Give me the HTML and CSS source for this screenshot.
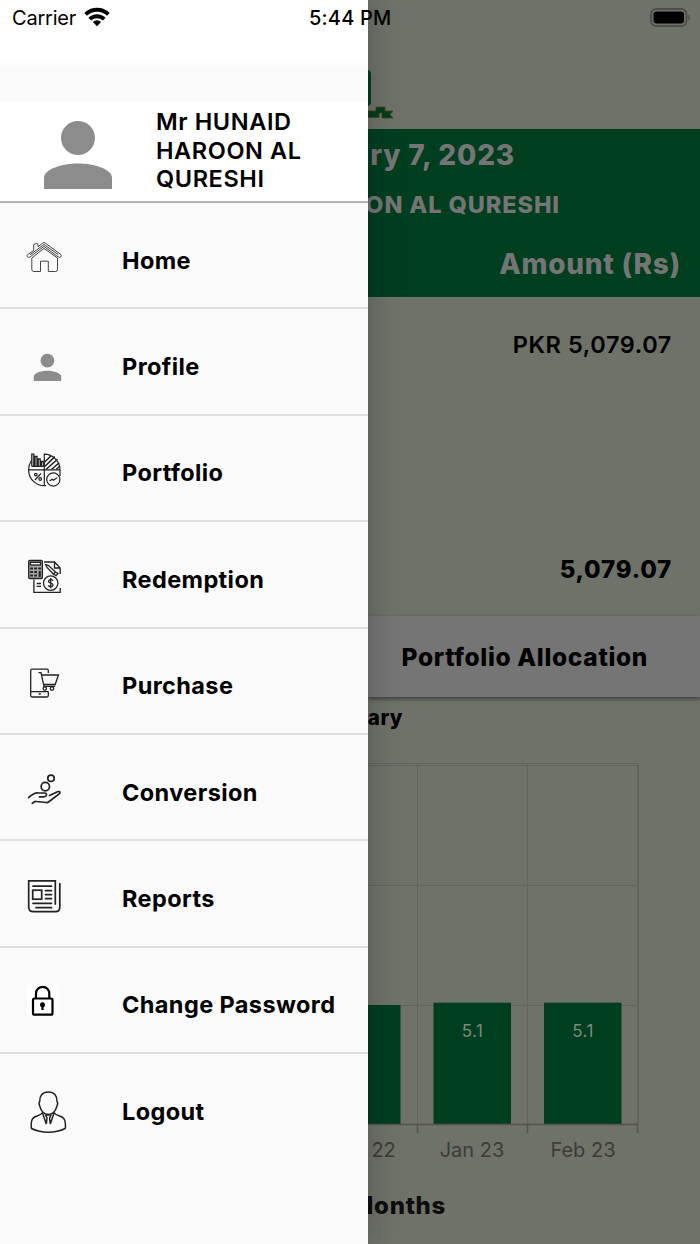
FILE: index.html
```
<!DOCTYPE html>
<html>
<head>
	<meta charset="utf-8">
	<title>Portfolio</title>
	<link rel="stylesheet" href="styles.css">
</head>
<body>
	<div class="statusbar">
		<span class="carrier">Carrier</span>
		<svg class="wifi" width="26" height="20" viewBox="0 0 26 20">
			<g fill="none" stroke="#000" stroke-width="3.9">
				<path d="M1.6 7.4A16.2 16.2 0 0 1 24.4 7.4"/>
				<path d="M5.800 12.200A10.2 10.2 0 0 1 20.200 12.200"/>
			</g>
			<path d="M13 19.2L8.9 15A5.8 5.8 0 0 1 17.1 15Z"/>
		</svg>
		<span class="time">5:44 PM</span>
		<svg class="battery" width="42" height="20" viewBox="0 0 42 20">
			<rect x="1" y="1" width="35.500" height="17" rx="5" fill="none" stroke="#454641" stroke-width="1.500"/>
			<rect x="3.500" y="3.500" width="30.500" height="12" rx="3"/>
			<path d="M38.500 6.500a4 4 0 0 1 0 6z" fill="#454641"/>
		</svg>
	</div>
	<div class="app">
		<div class="drawer">
			<div class="drawer-top"></div>
			<div class="user">
				<svg class="avatar" width="68" height="68" viewBox="0 0 68 68" fill="#8c8c8c">
					<circle cx="34" cy="17" r="17"/>
					<path d="M0 68V57C0 48 18 42.500 34 42.500S68 48 68 57V68Z"/>
				</svg>
				<div class="name">Mr HUNAID HAROON AL QURESHI</div>
			</div>
			<ul class="menu">
				<li>
					<svg viewBox="0 0 44 44" stroke="#444" stroke-width="1">
						<path d="M9.700 12.500V6.800Q9.700 6 10.500 6L12.200 5.600Q14 5.300 14 7V8.800L18.800 5Q20 4 21.200 5L36.600 16.400Q38 17.800 36.700 19Q35.500 20 34 18.800L20 8.400L6.200 18.800Q4.600 20 3.500 18.800Q2.500 17.600 3.800 16.500Z"/>
						<path d="M6 16.800L20 6.500L34.500 16.800"/>
						<path d="M7.800 20V31.500Q7.800 33.500 9.800 33.500H16.500V23.200H24.300V33.500H31.500Q33.500 33.500 33.500 31.500V20L20 10.400Z"/>
					</svg>
					<span>Home</span>
				</li>
				<li>
					<svg viewBox="0 0 44 44">
						<g fill="#8c8c8c"><circle cx="23.400" cy="15.600" r="6.900"/>
						<path d="M9.800 36V31.600C9.800 28 17 25.700 23.400 25.700S37.200 28 37.200 31.600V36Z"/></g>
					</svg>
					<span>Profile</span>
				</li>
				<li>
					<svg viewBox="0 0 44 44" stroke="#222" stroke-width="1.200">
						<path d="M20.300 3.200A15.800 15.800 0 0 1 36 18.900H20.300Z"/>
						<path d="M20.800 11L27 4.800M20.800 15.500L30.800 5.600M22 18.500L33.500 8.300M27.500 18.500L35.200 11.800M32 18.500L35.800 15.200" stroke-width="1.500"/>
						<path d="M7.500 9.500A15.800 15.800 0 0 0 4.600 18.900H20.300V34.700M4.600 18.900A15.800 15.800 0 0 0 22 34.600M36 18.900V25"/>
						<path d="M7.800 15.400V3.200H9.800V15.400M11 15.400V5.500H13V15.400M14.200 15.400V8H16.200V15.400M17.400 15.400V10.500H19.300V15.400H7.800" stroke-width="1.300"/>
						<circle cx="29.300" cy="28.500" r="6.600"/>
						<path d="M25.600 30L28 28.300L29.500 29.300L33 26.800"/>
						<path d="M11 29L17 22.500"/><circle cx="11.800" cy="23.600" r="1.300"/><circle cx="16.200" cy="28" r="1.300"/>
					</svg>
					<span>Portfolio</span>
				</li>
				<li>
					<svg viewBox="0 0 44 44" stroke="#222" stroke-width="1.300">
						<rect x="4.700" y="3.500" width="13.700" height="18" rx="1" fill="#aaa"/>
						<rect x="6.500" y="5.300" width="10" height="2.700" fill="#fafafa"/>
						<path d="M6.200 11.500H9M10.200 11.500H13M14.200 11.500H17M6.200 15H9M10.200 15H13M6.200 18.500H9M10.200 18.500H13M15.700 14V20" stroke-width="2.200"/>
						<path d="M20 5H30.500L36.200 11V17M9.900 22.500V35.300H36.200V31M30.500 5V11H36.200"/>
						<path d="M21.700 7.500L24.200 8.300L31.500 15L29.300 17L23 10.500ZM29.500 17L32 18.600L34 16.500L31.500 15"/>
						<circle cx="26.700" cy="26.100" r="7.200"/>
						<path d="M29 23.700C27.800 21.800 24.400 22.500 24.500 24.400C24.600 26.600 29 25.600 29 28C29 30 25.300 30.400 24.200 28.400M26.700 21V31.200"/>
						<path d="M12.700 26.500H17M12.700 29.300H17"/>
					</svg>
					<span>Redemption</span>
				</li>
				<li>
					<svg viewBox="0 0 44 44" stroke="#222" stroke-width="1.300">
						<path d="M24.300 9V6.500Q24.300 5.200 23 5.200H8Q6.700 5.200 6.700 6.500V31.500Q6.700 33 8 33H23Q24.300 33 24.300 31.500V27.500M6.700 27.600H24.300"/>
						<path d="M14.700 29.900H16.800" stroke-width="1.600"/>
						<path d="M14.500 8.600H17L20 22.400H31.200M18 11H34.400L31.200 20.500H19.600"/>
						<circle cx="20.800" cy="24.600" r="1.700"/><circle cx="28" cy="24.600" r="1.700"/>
					</svg>
					<span>Purchase</span>
				</li>
				<li>
					<svg viewBox="0 0 44 44" stroke="#222" stroke-width="1.700" stroke-linecap="round" stroke-linejoin="round">
						<circle cx="27" cy="8.300" r="3.200"/>
						<circle cx="21.300" cy="16.600" r="4.200"/>
						<path d="M4.600 27.600C8 24.600 11 22.500 14.500 23H20.500Q22.800 23.200 22.500 25Q22 26.800 19.500 26.900H15.500"/>
						<path d="M25.500 25.500L33.500 21.800Q35.800 21 36 22.500Q36 23.500 34.500 24.300L24.500 32Q23.400 32.700 22 32.500L12.500 31.500Q10.500 31.200 8.300 33.300"/>
					</svg>
					<span>Conversion</span>
				</li>
				<li>
					<svg viewBox="0 0 44 44" stroke="#222" stroke-width="1.700" stroke-linecap="round">
						<path d="M31.300 27V3.900H4.700V30Q4.700 34.700 9.500 34.700H31.500Q35.800 34.700 35.800 30V6.500"/>
						<path d="M9 9.200H27.500M9 26.300H27.500M12 30.700H27.500M21.500 13.700H27.500M21.500 17.700H27.500M21.500 21.700H27.500"/>
						<rect x="8.700" y="13.200" width="9" height="9"/>
					</svg>
					<span>Reports</span>
				</li>
				<li>
					<svg viewBox="0 0 44 44" stroke="#000" stroke-width="2.200">
						<rect x="3.300" y="2.200" width="30.400" height="30.400" fill="#fff" stroke="none"/>
						<path d="M12 15.500V10.500A6.600 6.600 0 0 1 25.300 10.500V15.500"/>
						<rect x="9" y="15.500" width="19.500" height="16.200" rx="1.500"/>
						<circle cx="18.500" cy="21.800" r="2.500" fill="#000" stroke="none"/><path d="M18.500 22V27"/>
					</svg>
					<span>Change Password</span>
				</li>
				<li>
					<svg viewBox="0 0 44 44" stroke="#222" stroke-width="1.500">
						<path d="M24.300 3C30.500 3 33.300 7 33 12.500Q34.500 14 32.800 17.500C31.500 22 28.500 25.500 24.300 25.500S17.200 22 15.900 17.500Q14.200 14 15.700 12.500C15.400 7 18.200 3 24.300 3Z"/>
						<path d="M18.500 23.500Q17.500 25.500 13 27Q7.500 28.500 7.300 34Q7 38 7.500 39.500Q15 43.200 24.300 43.200T41.200 39.500Q41.700 38 41.300 34Q41 28.500 35.600 27Q31 25.500 30 23.500"/>
						<path d="M18.500 24L22.300 35L23 29L21.500 26M30 24L26.300 35L25.600 29L27.100 26M22.500 26H26"/>
					</svg>
					<span>Logout</span>
				</li>
			</ul>
		</div>
		<div class="main">
			<div class="logo">
				<svg width="26" height="50" viewBox="0 0 26 50">
					<path d="M0 0Q3 1 3 4V32Q3 35 0 36Z" fill="#003e20"/>
					<path d="M0 41H8V37H17V41H25L22 44.500L25 48H14V43H11V47.500H0Z" fill="#003e20" stroke="#4b4219" stroke-width=".8"/>
				</svg>
			</div>
			<div class="summary">
				<div class="date"><span>February 7, 2023</span></div>
				<div class="holder"><span>Mr HUNAID HAROON AL QURESHI</span></div>
				<div class="amount"><span>Amount (Rs)</span></div>
			</div>
			<div class="values">
				<div class="fund"><span>PKR 5,079.07</span></div>
				<div class="total"><span>5,079.07</span></div>
			</div>
			<div class="tab"><span>Portfolio Allocation</span></div>
			<div class="chart-title"><span>Summary</span></div>
			<svg class="chart" width="332" height="420" viewBox="0 0 332 420">
				<g stroke="#62645f" fill="none" shape-rendering="crispEdges">
					<path d="M0 13.500H269M0 15.500H269M0 135.500H269M0 255.500H269M49.500 14V375M159.500 14V375"/>
					<path d="M269.500 13V375" stroke-width="2"/>
				</g>
				<g fill="#003e20">
					<rect x="0" y="255" width="32.500" height="120"/>
					<rect x="65.500" y="252.700" width="77.500" height="122"/>
					<rect x="176" y="252.700" width="77.500" height="122"/>
				</g>
				<path d="M0 374.500H270M49.500 374V383M159.500 374V383M269.500 374V383" stroke="#53544f" stroke-width="1.500" fill="none"/>
				<g class="value"><text x="104.500" y="286.500">5.1</text><text x="215" y="286.500">5.1</text></g>
				<g class="month"><text x="-6" y="407">Dec 22</text><text x="104" y="407">Jan 23</text><text x="215" y="407">Feb 23</text></g>
			</svg>
			<div class="axis-title"><span>Months</span></div>
		</div>
	</div>
</body>
</html>
```
FILE: styles.css
```
*{box-sizing:border-box;}
body{margin:0; font-family:Inter, "Liberation Sans", sans-serif; background:#6f7269; color:#000;}
.app{display:flex; height:1244px; overflow:hidden;}

/* status bar lies over the drawer and the page */
.statusbar{position:absolute; top:0; left:0; width:700px; height:36px; z-index:5; display:flex; align-items:center; padding:0 8px 0 12px; font-size:20px;}
.carrier{width:65px; letter-spacing:-.2px;}
.wifi{margin-left:7px; margin-top:-2px;}
.time{margin-left:199px; font-weight:500; letter-spacing:.2px;}
.battery{margin-left:auto; margin-top:-1px;}

.drawer{width:368px; flex:none; background:#fafafa; position:relative; z-index:2; box-shadow:0 0 30px rgba(0,0,0,.24);}
.drawer-top{height:101px; background:linear-gradient(#fff 60px, #fafafa 68px);}
.user{height:102px; display:flex; align-items:center; padding:0 0 0 44px; background:#fff; border-bottom:2px solid #b4b4b4;}
.avatar{margin-top:7px;}
.name{margin-left:44px; width:170px; font-size:23.5px; font-weight:600; line-height:28.8px; letter-spacing:.6px;}
.menu{list-style:none; margin:0; padding:0;}
.menu li{height:106.4px; display:flex; align-items:center; padding:10px 0 0 24px; border-bottom:2px solid #e0e0e0; font-size:23.5px; font-weight:650; letter-spacing:.4px;}
.menu li:last-child{border-bottom-color:transparent;}
.menu svg{width:44px; height:44px; margin-right:54px; fill:none;}

.main{flex:1; overflow:hidden; display:flex; flex-direction:column;}
.main > div{flex:none;}
.main div > span{white-space:nowrap;}
.logo{height:128.5px; padding-top:70px;}
.summary{height:168.5px; background:#003e20; color:#757575; font-weight:800;}
.summary div, .values div, .chart-title, .axis-title{display:flex; justify-content:flex-end; align-items:center;}
.date{height:52px; padding-right:185px; font-size:28px; letter-spacing:.8px;}
.holder{height:48px; padding-right:140px; font-size:23.5px; letter-spacing:.9px;}
.amount{height:71px; padding-right:19px; font-size:28px; letter-spacing:.7px;}
.values{height:319px; padding-right:28px;}
.fund{height:95px; font-size:23.5px; font-weight:600; letter-spacing:.6px;}
.total{height:354px; font-size:24px; font-weight:800; letter-spacing:.8px;}
.tab{height:81px; padding-left:33.5px; display:flex; align-items:center; background:#757575; font-size:24.5px; font-weight:800; letter-spacing:.65px; position:relative; box-shadow:0 2px 4px rgba(0,0,0,.45);}
.chart-title{height:41px; padding-right:297px; font-size:20.5px; font-weight:800; letter-spacing:.5px;}
.chart{display:block; flex:none; margin-top:12px;}
.chart text{text-anchor:middle;}
.value{font-size:17px; letter-spacing:.4px; fill:#7b8a81;}
.month{font-size:20px; fill:#3b3c38;}
.axis-title{height:70px; padding-right:254px; font-size:24px; font-weight:800; letter-spacing:.7px; color:#0c0d0c;}
```
